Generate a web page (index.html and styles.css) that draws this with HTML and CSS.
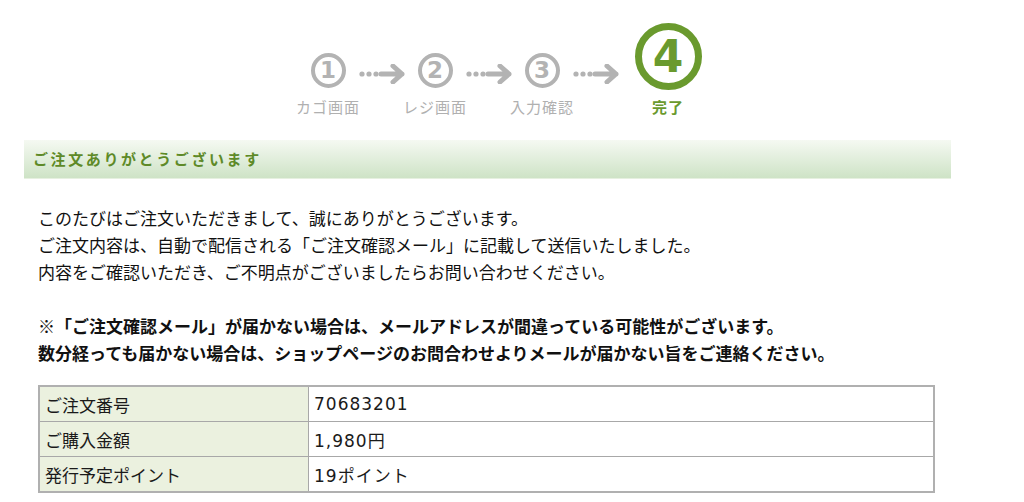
FILE: index.html
```html
<!DOCTYPE html>
<html lang="ja">
<head>
  <meta charset="UTF-8" />
  <title>ご注文完了</title>
  <link rel="stylesheet" href="styles.css">
</head>
<body>
  <div class="page">
    <!-- Order steps -->
    <div class="steps">
      <div class="step">
        <div class="step-icon"><span class="num">1</span></div>
        <div class="step-label">カゴ画面</div>
      </div>
      <div class="arrow">
        <svg width="48" height="20" viewBox="0 0 48 20">
          <circle cx="3" cy="10" r="2.6" fill="#b3b3b3"/>
          <circle cx="10" cy="10" r="2.6" fill="#b3b3b3"/>
          <circle cx="17" cy="10" r="2.6" fill="#b3b3b3"/>
          <path d="M22 10 H43 M34 2 L43 10 L34 18" stroke="#b3b3b3" stroke-width="5" fill="none" stroke-linecap="round" stroke-linejoin="round"/>
        </svg>
      </div>
      <div class="step">
        <div class="step-icon"><span class="num">2</span></div>
        <div class="step-label">レジ画面</div>
      </div>
      <div class="arrow">
        <svg width="48" height="20" viewBox="0 0 48 20">
          <circle cx="3" cy="10" r="2.6" fill="#b3b3b3"/>
          <circle cx="10" cy="10" r="2.6" fill="#b3b3b3"/>
          <circle cx="17" cy="10" r="2.6" fill="#b3b3b3"/>
          <path d="M22 10 H43 M34 2 L43 10 L34 18" stroke="#b3b3b3" stroke-width="5" fill="none" stroke-linecap="round" stroke-linejoin="round"/>
        </svg>
      </div>
      <div class="step">
        <div class="step-icon"><span class="num">3</span></div>
        <div class="step-label">入力確認</div>
      </div>
      <div class="arrow">
        <svg width="48" height="20" viewBox="0 0 48 20">
          <circle cx="3" cy="10" r="2.6" fill="#b3b3b3"/>
          <circle cx="10" cy="10" r="2.6" fill="#b3b3b3"/>
          <circle cx="17" cy="10" r="2.6" fill="#b3b3b3"/>
          <path d="M22 10 H43 M34 2 L43 10 L34 18" stroke="#b3b3b3" stroke-width="5" fill="none" stroke-linecap="round" stroke-linejoin="round"/>
        </svg>
      </div>
      <div class="step current">
        <div class="step-icon"><span class="num">4</span></div>
        <div class="step-label">完了</div>
      </div>
    </div>

    <!-- Thank you heading -->
    <h2 class="title">ご注文ありがとうございます</h2>

    <div class="message">
      <p>このたびはご注文いただきまして、誠にありがとうございます。<br>
      ご注文内容は、自動で配信される「ご注文確認メール」に記載して送信いたしました。<br>
      内容をご確認いただき、ご不明点がございましたらお問い合わせください。</p>
      <p class="note">※「ご注文確認メール」が届かない場合は、メールアドレスが間違っている可能性がございます。<br>
      数分経っても届かない場合は、ショップページのお問合わせよりメールが届かない旨をご連絡ください。</p>
    </div>

    <table class="order-table">
      <tr><th>ご注文番号</th><td>70683201</td></tr>
      <tr><th>ご購入金額</th><td>1,980円</td></tr>
      <tr><th>発行予定ポイント</th><td>19ポイント</td></tr>
    </table>
  </div>
</body>
</html>
```

FILE: styles.css
```css
/* Global */
body {
  margin: 0;
  padding: 0;
  background: #fff;
  color: #111;
  font-family: "Noto Sans CJK JP", "Noto Sans", sans-serif;
}
.page {
  width: 927px;
  padding-left: 24px;
}

/* Steps */
.steps {
  display: grid;
  grid-template-columns: 70px 37px 70px 37px 70px 46px 90px;
  margin-left: 269px;
  height: 140px;
  align-items: start;
}
.step {
  display: flex;
  flex-direction: column;
  align-items: center;
}
.step-icon {
  height: 90px;
  display: flex;
  align-items: flex-end;
  justify-content: center;
}
.step-icon .num {
  width: 27px;
  height: 27px;
  border: 4.5px solid #b3b3b3;
  border-radius: 50%;
  display: flex;
  align-items: center;
  justify-content: center;
  color: #b3b3b3;
  font-family: "DejaVu Sans", sans-serif;
  font-weight: bold;
  font-size: 23px;
  line-height: 1;
  margin-bottom: 2px;
}
.step.current .step-icon .num {
  width: 53px;
  height: 53px;
  border: 7px solid #6a9a2e;
  color: #6a9a2e;
  font-size: 44px;
  margin-bottom: 0;
}
.step-label {
  margin-top: 7px;
  font-size: 15px;
  letter-spacing: 1px;
  color: #b0b0b0;
  line-height: 20px;
  white-space: nowrap;
}
.step.current .step-label {
  color: #6a9a2e;
  font-weight: bold;
}
.arrow {
  padding-top: 64px;
  margin-left: -4px;
}

/* Heading bar */
.title {
  margin: 0;
  height: 38px;
  line-height: 38px;
  padding-left: 9px;
  font-size: 15px;
  font-weight: bold;
  letter-spacing: 2.6px;
  color: #5e8a28;
  background: linear-gradient(to bottom, #f5f9f2, #cee3c6);
  border-bottom: 1px solid #e6f0e0;
}

/* Message */
.message {
  padding: 25px 0 0 14px;
  font-size: 17px;
  line-height: 27px;
}
.message p {
  margin: 0 0 27px;
}
.message p.note {
  font-weight: bold;
  margin-bottom: 19px;
}

/* Order table */
.order-table {
  margin-left: 14px;
  width: 897px;
  border-collapse: collapse;
  border: 2px solid #b0b0b0;
  font-size: 17px;
}
.order-table th,
.order-table td {
  border: 1px solid #a8a8a8;
  height: 34px;
  padding: 0 5px;
  text-align: left;
  font-weight: normal;
  color: #1a1a1a;
}
.order-table th {
  width: 258px;
  background-color: #ebf1df;
}
.order-table td {
  font-family: "DejaVu Sans", "Noto Sans CJK JP", sans-serif;
  letter-spacing: 1px;
}
```
